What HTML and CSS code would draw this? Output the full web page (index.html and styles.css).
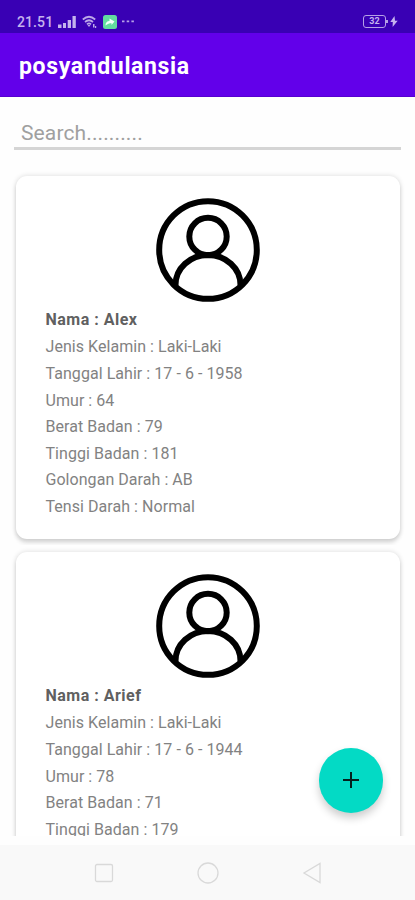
FILE: index.html
```html
<!DOCTYPE html>
<html lang="id">
<head>
<meta charset="utf-8">
<title>posyandulansia</title>
<link rel="stylesheet" href="styles.css">
</head>
<body>
<svg class="defs" width="0" height="0" aria-hidden="true">
  <symbol id="avatar" viewBox="0 0 104 104">
    <g fill="none" stroke="#000" stroke-width="6">
      <circle cx="52" cy="52" r="48.800"/>
      <circle cx="52" cy="38.500" r="18.700"/>
      <path d="M19.500 87A32.500 30 0 0 1 84.500 87"/>
    </g>
  </symbol>
</svg>
<header class="status">
  <span class="time">21.51</span>
  <svg class="signal" width="18" height="12" viewBox="0 0 18 12"><path d="M0 8.500h3.500V12H0zM5 7h3v5H5zM9.700 4h3.300v8H9.700zM14.500 0h3.300v12h-3.300z" fill="#c5b3ee"/></svg>
  <svg class="wifi" width="16" height="14" viewBox="0 0 16 14"><g fill="none" stroke="#bca8e8" stroke-width="1.700"><path d="M.8 4.500Q7 -1 13.200 4.500M3 7Q7 3.500 11 7M5 9.300Q7 7.500 9 9.300"/></g><path d="M5.500 10L7 12l1.500-2zM11 9h1.500v3.500H11zM13 11h1.200v2H13z" fill="#bca8e8"/></svg>
  <svg class="app" width="14" height="14" viewBox="0 0 14 14"><rect width="14" height="14" rx="2.500" fill="#62dda0"/><path d="M2.500 10.500c0-3 1.500-4.500 4-4.500V3.500L11.500 6.500 8.500 10V8.300c-2 0-4 .5-6 2.200z" fill="#f2fff9"/></svg>
  <svg class="dots" width="12" height="3" viewBox="0 0 12 3"><path d="M0 .5h2.500v1.700H0zM4.700.5h2.500v1.700H4.700zM9.400.5h2.500v1.700H9.400z" fill="#b5a0e6"/></svg>
  <span class="battery">32</span>
  <svg class="bolt" width="8" height="11" viewBox="0 0 8 11"><path d="M4.500 0L.3 6h2.500L2.600 11 7.700 4.700H5z" fill="#c5b3ee"/></svg>
</header>
<div class="appbar"><h1>posyandulansia</h1></div>
<div class="search">Search..........</div>
<main class="list">
  <div class="item"><article class="card">
    <svg class="avatar"><use href="#avatar"/></svg>
    <h2>Nama : Alex</h2>
    <p>Jenis Kelamin : Laki-Laki</p>
    <p>Tanggal Lahir : 17 - 6 - 1958</p>
    <p>Umur : 64</p>
    <p>Berat Badan : 79</p>
    <p>Tinggi Badan : 181</p>
    <p>Golongan Darah : AB</p>
    <p>Tensi Darah : Normal</p>
  </article></div>
  <div class="item"><article class="card">
    <svg class="avatar"><use href="#avatar"/></svg>
    <h2>Nama : Arief</h2>
    <p>Jenis Kelamin : Laki-Laki</p>
    <p>Tanggal Lahir : 17 - 6 - 1944</p>
    <p>Umur : 78</p>
    <p>Berat Badan : 71</p>
    <p>Tinggi Badan : 179</p>
  </article></div>
</main>
<div class="fab"><svg width="16" height="16" viewBox="0 0 16 16"><path d="M8 0v16M0 8h16" stroke="#05201d" stroke-width="2"/></svg></div>
<nav class="nav">
  <svg width="22" height="22" viewBox="0 0 22 22"><rect x="2.500" y="2.500" width="17" height="17" rx="1.500"/></svg>
  <svg width="22" height="22" viewBox="0 0 22 22"><circle cx="11" cy="11" r="10"/></svg>
  <svg width="22" height="22" viewBox="0 0 22 22"><path d="M19 1.500v19L3 11z"/></svg>
</nav>
</body>
</html>
```
FILE: styles.css
```css
* { box-sizing: border-box; }
body {
  margin: 0;
  width: 415px;
  height: 900px;
  overflow: hidden;
  display: flex;
  flex-direction: column;
  position: relative;
  background: #fefefe;
  font-family: Roboto, "Liberation Sans", sans-serif;
}
.defs { position: absolute; }
.status {
  height: 33px;
  flex: none;
  padding: 10px 17px 0 17px;
  display: flex;
  align-items: center;
  background: #3900b4;
  color: #c5b3ee;
}
.time { width: 36px; font-size: 14px; line-height: 22px; font-weight: 500; letter-spacing: 0.1px; }
.signal { margin-left: 5px; }
.wifi { margin-left: 6px; }
.app { margin-left: 5px; }
.dots { margin-left: 5px; }
.battery {
  position: relative;
  margin-left: auto;
  width: 23px;
  height: 13px;
  border: 1px solid #b5a0e6;
  border-radius: 3px;
  font-size: 9px;
  line-height: 11px;
  font-weight: 700;
  text-align: center;
}
.battery::after {
  content: "";
  position: absolute;
  right: -3px;
  top: 4px;
  width: 2px;
  height: 3px;
  background: #b5a0e6;
}
.bolt { margin-left: 4px; }
.appbar {
  height: 64px;
  flex: none;
  padding-left: 19px;
  background: #6200ea;
  border-bottom: 1px solid #5600d0;
}
.appbar h1 {
  margin: 0;
  font-size: 23px;
  line-height: 67px;
  font-weight: 700;
  letter-spacing: 0.650px;
  color: #fff;
}
.search {
  height: 53px;
  flex: none;
  margin: 0 14px;
  padding: 22px 0 0 7px;
  border-bottom: 3px solid #d5d5d5;
  font-size: 21px;
  line-height: 29px;
  letter-spacing: 0.120px;
  color: #a0a0a0;
}
.list {
  height: 667px;
  flex: none;
  margin: 19px 10px 0 11px;
  overflow: hidden;
}
.item { height: 376px; padding: 7px 5px 6px; overflow: hidden; }
.card {
  height: 363px;
  padding: 22px 29.500px 0;
  border-radius: 11px;
  background: #fff;
  box-shadow: 0 0 4px 1px rgba(0, 0, 0, 0.1), 0 4px 4px rgba(0, 0, 0, 0.12);
}
.avatar { display: block; width: 104px; height: 104px; margin: 0 auto 5px; }
.card h2, .card p { margin: 0; font-size: 16px; line-height: 26.600px; white-space: nowrap; }
.card h2 { height: 27.400px; font-weight: 700; letter-spacing: 0.500px; color: #606060; }
.card p { font-weight: 400; letter-spacing: 0.050px; color: #828282; }
.fab {
  position: absolute;
  left: 318.500px;
  top: 748px;
  width: 64.500px;
  height: 64.500px;
  border-radius: 50%;
  display: flex;
  align-items: center;
  justify-content: center;
  background: #03dac5;
  box-shadow: 0 5px 9px rgba(0, 0, 0, 0.2);
}
.nav {
  height: 55px;
  margin-top: auto;
  flex: none;
  padding: 0 92px 0 93px;
  display: flex;
  align-items: center;
  justify-content: space-between;
  background: #f9f9f9;
}
.nav svg { fill: none; stroke: #d9d9d9; stroke-width: 1.300; }
```
